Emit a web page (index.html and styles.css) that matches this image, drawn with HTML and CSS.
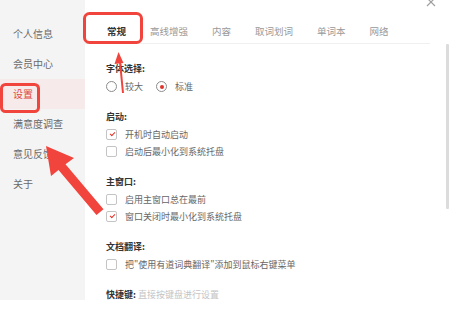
FILE: index.html
```html
<!DOCTYPE html>
<html lang="zh-CN">
<head>
    <meta charset="UTF-8">
    <meta name="viewport" content="width=device-width, initial-scale=1.0">
    <title>设置</title>
    <link rel="stylesheet" href="styles.css">
</head>
<body>
    <div class="window">
        <ul class="sidebar">
            <li>个人信息</li>
            <li>会员中心</li>
            <li class="active">设置</li>
            <li>满意度调查</li>
            <li>意见反馈</li>
            <li>关于</li>
        </ul>

        <div class="main">
            <div class="titlebar">
                <svg class="close" width="10" height="10" viewBox="0 0 10 10">
                    <path d="M1 1 L9 9 M9 1 L1 9" stroke="#a0a0a0" stroke-width="1.2" fill="none"/>
                </svg>
            </div>
            <div class="tabs">
                <span class="tab active">常规</span>
                <span class="tab">高线增强</span>
                <span class="tab">内容</span>
                <span class="tab">取词划词</span>
                <span class="tab">单词本</span>
                <span class="tab">网络</span>
            </div>

            <div class="panel">
                <div class="settings">
                    <div class="group">
                        <div class="group-title">字体选择:</div>
                        <div class="row">
                            <span class="option"><i class="radio"></i>较大</span>
                            <span class="option"><i class="radio on"></i>标准</span>
                        </div>
                    </div>

                    <div class="group">
                        <div class="group-title">启动:</div>
                        <div class="row"><i class="check on"></i>开机时自动启动</div>
                        <div class="row"><i class="check"></i>启动后最小化到系统托盘</div>
                    </div>

                    <div class="group">
                        <div class="group-title">主窗口:</div>
                        <div class="row"><i class="check"></i>启用主窗口总在最前</div>
                        <div class="row"><i class="check on"></i>窗口关闭时最小化到系统托盘</div>
                    </div>

                    <div class="group">
                        <div class="group-title">文档翻译:</div>
                        <div class="row"><i class="check"></i>把"使用有道词典翻译"添加到鼠标右键菜单</div>
                    </div>

                    <div class="group">
                        <div class="group-title">快捷键: <span class="hint">直接按键盘进行设置</span></div>
                    </div>
                </div>
                <div class="scrollbar"><div class="thumb"></div></div>
            </div>
        </div>
    </div>

    <!-- red annotation marks drawn over the screenshot -->
    <svg class="marks" width="455" height="327" viewBox="0 0 455 327">
        <rect x="1.5" y="84.5" width="37" height="27" rx="4" fill="none" stroke="#f0443c" stroke-width="3"/>
        <rect x="84.5" y="13.5" width="57" height="29" rx="5" fill="none" stroke="#f0443c" stroke-width="3"/>
        <path d="M120 62 L123 93" stroke="#f0443c" stroke-width="2" fill="none"/>
        <polygon points="118.5,52 114.5,64 123.5,63" fill="#f0443c"/>
        <polygon points="46,146 74,158 65.5,164.2 103.5,209.2 96.5,214.9 58.5,169.9 51,176" fill="#f0443c"/>
    </svg>
</body>
</html>
```

FILE: styles.css
```css
body {
    margin: 0;
    font-family: "Noto Sans CJK SC", "Noto Sans", sans-serif;
    background: #ffffff;
    color: #555;
    width: 455px;
    height: 327px;
    overflow: hidden;
}
.window {
    display: flex;
    height: 327px;
}
.sidebar {
    list-style: none;
    margin: 0;
    padding: 19px 0 0 0;
    width: 85px;
    height: 281px;
    background: #f5f4f4;
    flex-shrink: 0;
}
.sidebar li {
    height: 30px;
    line-height: 30px;
    padding-left: 13px;
    font-size: 10px;
    color: #6a6a6a;
}
.sidebar li.active {
    background: #f7eaea;
    color: #e0473d;
}
.main {
    flex: 1;
    display: flex;
    flex-direction: column;
}
.titlebar {
    height: 20px;
    display: flex;
    justify-content: flex-end;
    padding-right: 19px;
}
.close {
    margin-top: -3px;
}
.tabs {
    display: flex;
    gap: 24px;
    height: 23px;
    line-height: 23px;
    padding-left: 22px;
    margin-right: 25px;
    border-bottom: 1px solid #f0f0f0;
}
.tab {
    font-size: 9.5px;
    color: #999;
    margin-top: -0.5px;
}
.tab.active {
    color: #333;
    font-weight: bold;
}
.panel {
    flex: 1;
    display: flex;
}
.settings {
    flex: 1;
    padding: 16px 0 0 21px;
}
.group {
    margin-bottom: 13px;
}
.group-title {
    height: 18px;
    line-height: 18px;
    font-size: 9px;
    font-weight: bold;
    color: #333;
}
.hint {
    font-weight: normal;
    color: #c4c4c4;
}
.row {
    height: 17px;
    display: flex;
    align-items: center;
    font-size: 9px;
    color: #666;
}
.option {
    display: flex;
    align-items: center;
    margin-right: 13px;
}
.radio {
    width: 9px;
    height: 9px;
    border: 1px solid #8c8c8c;
    border-radius: 50%;
    margin-right: 8px;
    display: flex;
    align-items: center;
    justify-content: center;
}
.radio.on::after {
    content: "";
    width: 4px;
    height: 4px;
    border-radius: 50%;
    background: #e0332c;
}
.check {
    width: 9px;
    height: 9px;
    border: 1px solid #c4c4c4;
    border-radius: 2px;
    margin-right: 8px;
    position: relative;
}
.check.on::after {
    content: "";
    position: absolute;
    left: 2.5px;
    top: 1.5px;
    width: 4px;
    height: 2px;
    border-left: 1.2px solid #e0332c;
    border-bottom: 1.2px solid #e0332c;
    transform: rotate(-45deg);
}
.scrollbar {
    width: 3px;
    margin-right: 6px;
}
.thumb {
    height: 165px;
    background: #dcdcdc;
    border-radius: 1px;
}
.marks {
    position: absolute;
    top: 0;
    left: 0;
    pointer-events: none;
}
```
